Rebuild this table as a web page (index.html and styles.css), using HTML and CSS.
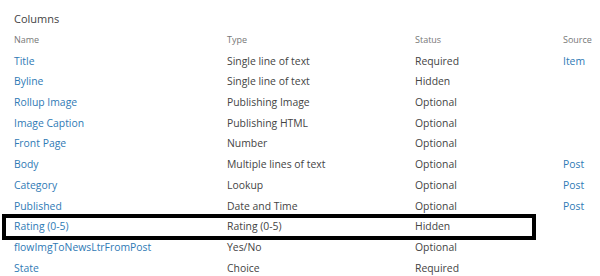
FILE: index.html
```html
<!DOCTYPE html>
<html>
<head>
<meta charset="utf-8">
<link rel="stylesheet" href="styles.css">
</head>
<body>
<div class="page">
  <div class="title">Columns</div>
  <div class="grid">
    <div class="row head"><span>Name</span><span>Type</span><span>Status</span><span>Source</span></div>
    <div class="row"><a>Title</a><span>Single line of text</span><span>Required</span><a>Item</a></div>
    <div class="row"><a>Byline</a><span>Single line of text</span><span>Hidden</span><span></span></div>
    <div class="row"><a>Rollup Image</a><span>Publishing Image</span><span>Optional</span><span></span></div>
    <div class="row"><a>Image Caption</a><span>Publishing HTML</span><span>Optional</span><span></span></div>
    <div class="row"><a>Front Page</a><span>Number</span><span>Optional</span><span></span></div>
    <div class="row"><a>Body</a><span>Multiple lines of text</span><span>Optional</span><a>Post</a></div>
    <div class="row"><a>Category</a><span>Lookup</span><span>Optional</span><a>Post</a></div>
    <div class="row"><a>Published</a><span>Date and Time</span><span>Optional</span><a>Post</a></div>
    <div class="row marked"><a>Rating (0-5)</a><span>Rating (0-5)</span><span>Hidden</span><span></span><div class="box"></div></div>
    <div class="row"><a>flowImgToNewsLtrFromPost</a><span>Yes/No</span><span>Optional</span><span></span></div>
    <div class="row"><a>State</a><span>Choice</span><span>Required</span><span></span></div>
  </div>
</div>
</body>
</html>
```
FILE: styles.css
```css
html, body { margin: 0; padding: 0; background: #fff; }
body { width: 600px; height: 276px; overflow: hidden; font-family: "Open Sans", "Noto Sans", sans-serif; }
.page { padding: 9px 0 0 14px; }
.title { font-size: 11px; color: #444; height: 21px; line-height: 19px; }
.grid { display: flex; flex-direction: column; }
.row { display: grid; grid-template-columns: 213px 188px 148px 40px; height: 20.7px; line-height: 20.7px; font-size: 10.4px; color: #444; position: relative; white-space: nowrap; }
.row a { color: #2f7ab5; }
.row.head { font-size: 9px; color: #777; }
.box { position: absolute; left: -12px; top: -2px; width: 526px; height: 18px; border: 4px solid #000; }
```
